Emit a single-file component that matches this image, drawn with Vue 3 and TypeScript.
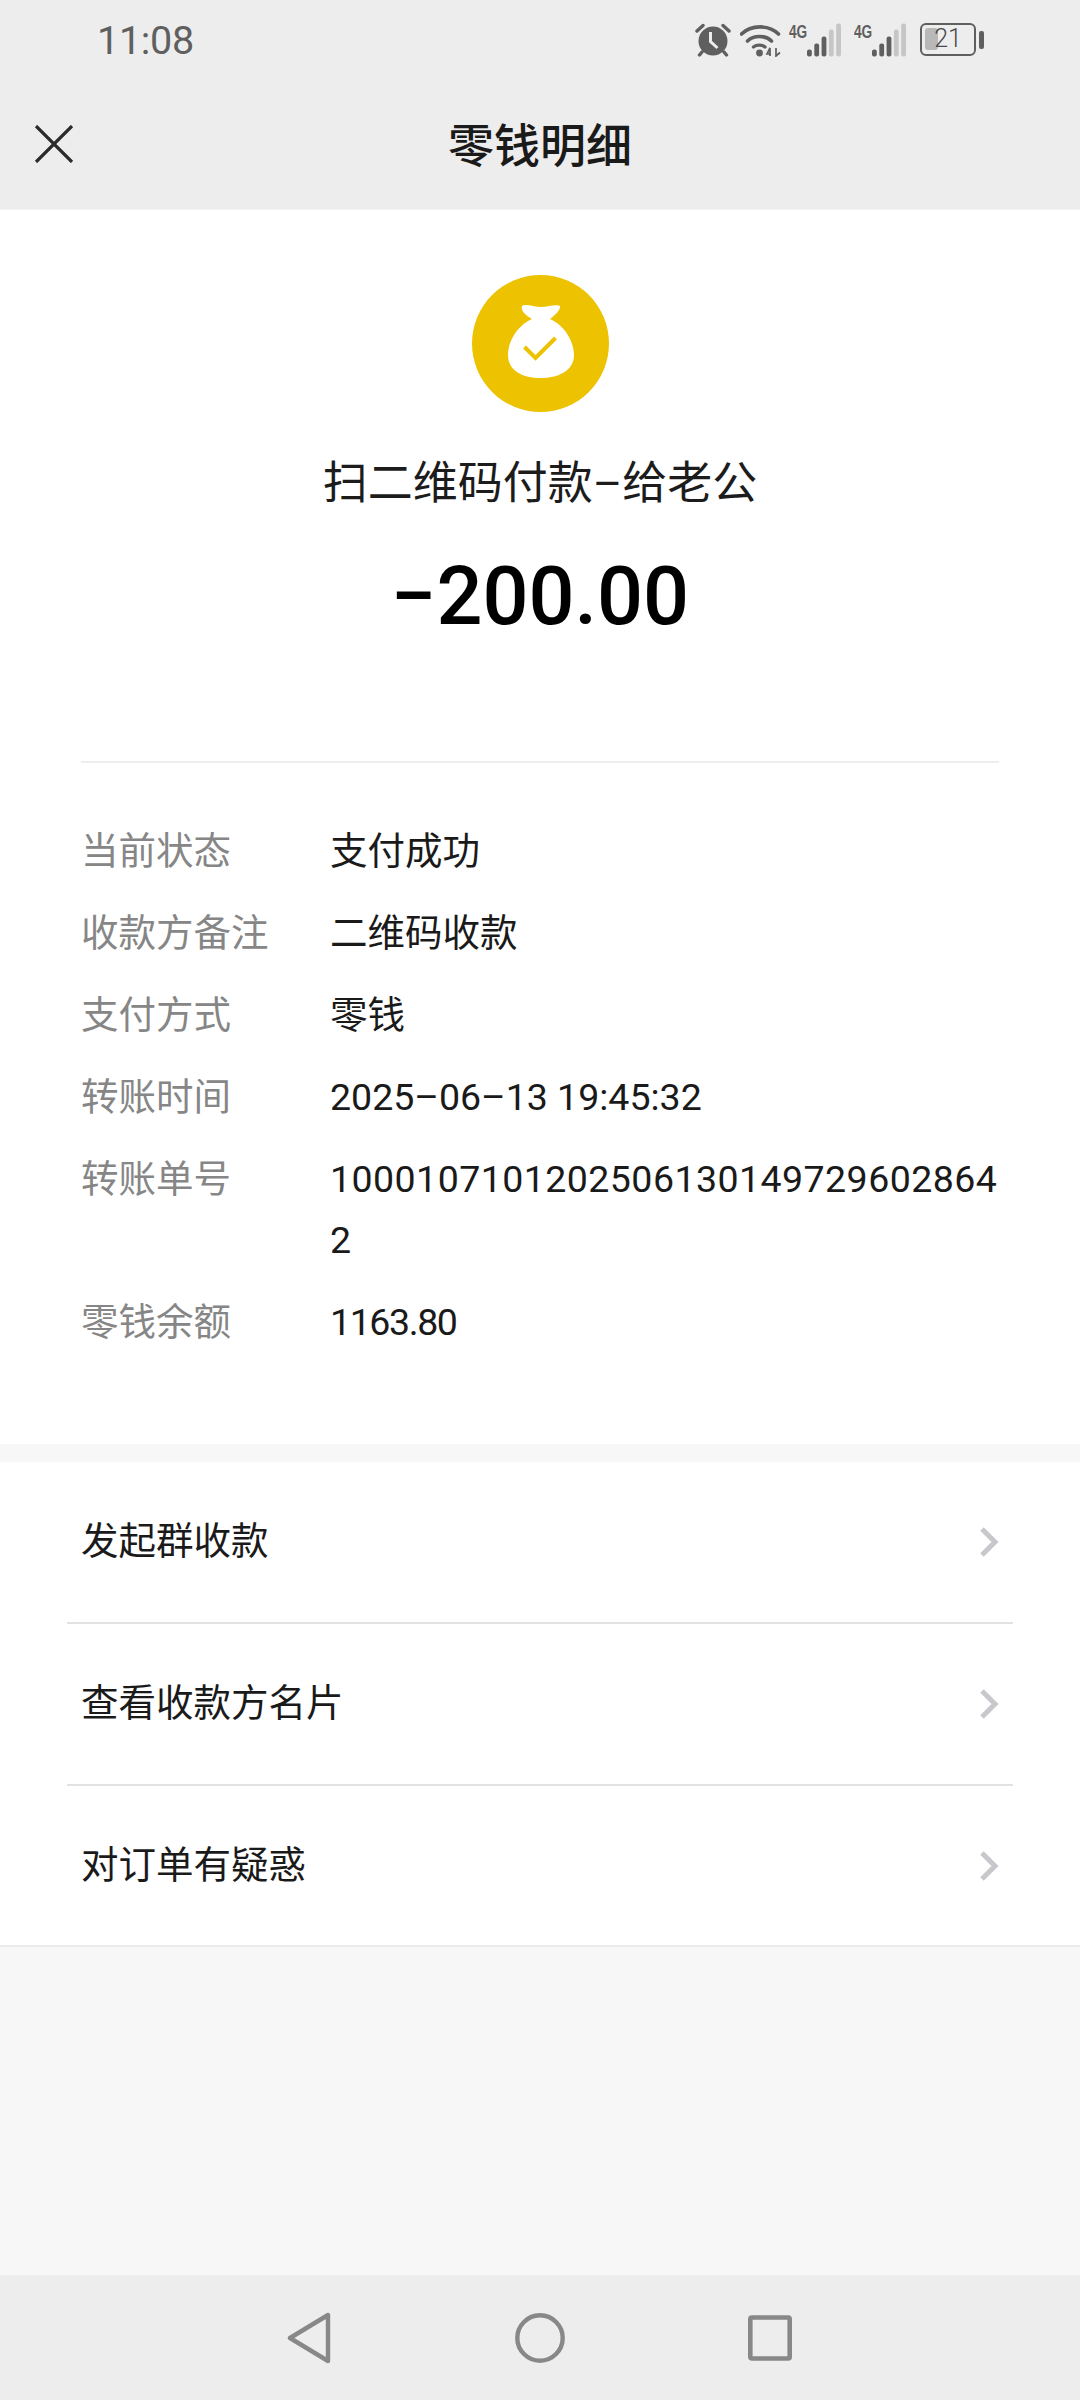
<script setup lang="ts">
const details: { label: string; value: string; kind?: string }[] = [
  { label: '当前状态', value: '支付成功' },
  { label: '收款方备注', value: '二维码收款' },
  { label: '支付方式', value: '零钱' },
  { label: '转账时间', value: '2025–06–13 19:45:32' },
  { label: '转账单号', value: '10001071012025061301497296028642', kind: 'digits' },
  { label: '零钱余额', value: '1163.80', kind: 'tight' },
];

const actions = ['发起群收款', '查看收款方名片', '对订单有疑惑'];

const bars = [
  { x: 0, h: 7, on: true },
  { x: 7.3, h: 13, on: true },
  { x: 14.6, h: 20, on: true },
  { x: 21.9, h: 27, on: false },
  { x: 29.2, h: 33, on: false },
];
</script>

<template>
  <div class="page">
    <header class="top">
      <div class="status">
        <span class="time">11:08</span>
        <div class="status-icons">
          <svg class="alarm" width="36" height="34" viewBox="0 0 36 34">
            <path d="M2 8 L8 2.5 M34 8 L28 2.5" stroke="#5f5f5f" stroke-width="3.4" stroke-linecap="round" />
            <path d="M7 29 L4.5 32 M29 29 L31.5 32" stroke="#5f5f5f" stroke-width="3.4" stroke-linecap="round" />
            <circle cx="18" cy="18" r="14.5" fill="#5f5f5f" />
            <path d="M15.5 9 V18.5 L22.5 25" fill="none" stroke="#ededed" stroke-width="3" />
          </svg>
          <svg class="wifi" width="42" height="34" viewBox="0 0 42 34">
            <path d="M1.5 11 C11 1.5 29 1.5 38.5 11" fill="none" stroke="#5f5f5f" stroke-width="3.6" stroke-linecap="round" />
            <path d="M7.5 18 C13.5 12 25.5 12 31.5 18" fill="none" stroke="#5f5f5f" stroke-width="3.6" stroke-linecap="round" />
            <path d="M13.5 24 C16.5 21.5 22 21.5 25 24" fill="none" stroke="#5f5f5f" stroke-width="3.4" stroke-linecap="round" />
            <circle cx="19.5" cy="30" r="3.4" fill="#5f5f5f" />
            <path d="M30 33 V25 L27 31 H31 M36 25 V33 L40 29.5" fill="none" stroke="#5f5f5f" stroke-width="1.7" />
          </svg>
          <div v-for="n in 2" :key="n" class="signal">
            <span class="net">4G</span>
            <svg width="36" height="34" viewBox="0 0 36 34">
              <rect
                v-for="bar in bars"
                :key="bar.x"
                :x="bar.x"
                :y="33.5 - bar.h"
                width="4.8"
                :height="bar.h"
                rx="2"
                :fill="bar.on ? '#5f5f5f' : '#c6c6c6'"
              />
            </svg>
          </div>
          <div class="battery">
            <div class="battery-body">
              <i class="battery-fill"></i>
              <span class="battery-num">21</span>
            </div>
            <i class="battery-tip"></i>
          </div>
        </div>
      </div>
      <div class="nav">
        <svg class="close" width="40" height="38" viewBox="0 0 40 38">
          <path d="M2 1 L38 37 M38 1 L2 37" stroke="#2b2b2b" stroke-width="3.2" />
        </svg>
        <h1 class="nav-title">零钱明细</h1>
      </div>
    </header>

    <section class="card">
      <svg class="bag" width="137" height="137" viewBox="0 0 137 137">
        <circle cx="68.5" cy="68.5" r="68.5" fill="#edc200" />
        <path
          d="M50 31 C54 28 62 32 69 32 C76 32 84 29 88 31 C89 35 82 41 78 44 C92 50 102 66 102 80 C102 96 86 103 68.5 103 C51 103 36 96 36 80 C36 66 46 50 60 44 C55 41 48 36 50 31 Z"
          fill="#fff"
        />
        <path d="M52.5 72 L63.5 83 L83.5 63" fill="none" stroke="#edc200" stroke-width="4" />
      </svg>
      <div class="payee">扫二维码付款–给老公</div>
      <div class="amount">−200.00</div>
      <div class="rule"></div>
      <dl class="details">
        <div v-for="item in details" :key="item.label" class="detail">
          <dt>{{ item.label }}</dt>
          <dd :class="item.kind">{{ item.value }}</dd>
        </div>
      </dl>
    </section>

    <ul class="actions">
      <li v-for="action in actions" :key="action" class="action">
        <span class="action-text">{{ action }}</span>
        <svg width="20" height="30" viewBox="0 0 20 30">
          <path d="M3 2 L16 15 L3 28" fill="none" stroke="#c8c8cc" stroke-width="5" />
        </svg>
      </li>
    </ul>

    <div class="spacer"></div>

    <footer class="sysnav">
      <svg width="45" height="52" viewBox="0 0 45 52">
        <path d="M41 3 V49 L3 26 Z" fill="none" stroke="#888" stroke-width="4.4" stroke-linejoin="round" />
      </svg>
      <svg width="50" height="50" viewBox="0 0 50 50">
        <circle cx="25" cy="25" r="22.7" fill="none" stroke="#888" stroke-width="4.4" />
      </svg>
      <svg width="44" height="46" viewBox="0 0 44 46">
        <rect x="2.3" y="2.5" width="39.4" height="41" rx="1.5" fill="none" stroke="#888" stroke-width="4.6" />
      </svg>
    </footer>
  </div>
</template>

<style>
html,
body {
  margin: 0;
  background: #f7f7f7;
}
</style>

<style scoped>
.page {
  width: 1080px;
  height: 2400px;
  display: flex;
  flex-direction: column;
  background: #f7f7f7;
  color: #1a1a1a;
  font-family: Roboto, "Noto Sans CJK SC", sans-serif;
}

.top {
  background: #ededed;
  height: 209px;
  flex: none;
  border-bottom: 1px solid #f4f4f4;
}

.status {
  height: 80px;
  display: flex;
  align-items: center;
  justify-content: space-between;
  padding: 0 96px 0 97px;
}

.time {
  font-size: 39.5px;
  color: #5f5f5f;
  line-height: 80px;
  letter-spacing: -0.3px;
  margin-top: 2px;
}

.status-icons {
  display: flex;
  align-items: center;
  height: 34px;
  margin-top: -1px;
}

.alarm {
  margin-right: 9px;
}

.wifi {
  margin-right: 7px;
}

.signal {
  display: flex;
  align-items: flex-start;
  width: 65px;
  height: 34px;
}

.net {
  flex: none;
  width: 18px;
  font-size: 19px;
  line-height: 18px;
  font-weight: 700;
  color: #5f5f5f;
  font-family: "Liberation Sans", sans-serif;
  transform: scaleX(0.72);
  transform-origin: left top;
  white-space: nowrap;
}

.battery {
  display: flex;
  align-items: center;
  margin-left: 1px;
}

.battery-body {
  position: relative;
  box-sizing: border-box;
  width: 56px;
  height: 33px;
  border: 2.5px solid #5f5f5f;
  border-radius: 6px;
}

.battery-fill {
  position: absolute;
  left: 3px;
  top: 3px;
  width: 13px;
  height: 22px;
  background: #b8b8b8;
  border-radius: 3px;
}

.battery-num {
  position: absolute;
  inset: 0;
  text-align: center;
  font-size: 25px;
  line-height: 28px;
  color: #4a4a4a;
  font-weight: 300;
}

.battery-tip {
  width: 5px;
  height: 18px;
  margin-left: 3px;
  border-radius: 2px;
  background: #5f5f5f;
}

.nav {
  height: 129px;
  display: flex;
  align-items: center;
  justify-content: center;
  position: relative;
}

.close {
  position: absolute;
  left: 34px;
  top: 45px;
}

.nav-title {
  margin: 3px 0 0;
  font-size: 46px;
  font-weight: 500;
  line-height: 130px;
  color: #1a1a1a;
}

.card {
  background: #fff;
  flex: none;
  height: 1234px;
  box-sizing: border-box;
  padding-top: 65px;
  display: flex;
  flex-direction: column;
  align-items: center;
}

.bag {
  display: block;
  flex: none;
}

.payee {
  margin-top: 42px;
  font-size: 45px;
  line-height: 60px;
  color: #1c1c1c;
}

.amount {
  margin-top: 33px;
  font-size: 81px;
  line-height: 100px;
  font-weight: 500;
  color: #000;
}

.rule {
  width: 918px;
  height: 2px;
  background: #eeeeee;
  margin-top: 114px;
  flex: none;
}

.details {
  width: 918px;
  margin: 58px 0 0;
  display: flex;
  flex-direction: column;
  gap: 21px;
}

.detail {
  display: grid;
  grid-template-columns: 249px 669px;
  font-size: 37.5px;
  line-height: 61px;
}

.detail dt {
  color: #868686;
}

.detail dd {
  margin: 0;
  color: #1a1a1a;
  word-break: break-all;
}

.detail dd.digits {
  letter-spacing: 0.45px;
}

.detail dd.tight {
  letter-spacing: -1.4px;
}

.actions {
  list-style: none;
  margin: 18px 0 0;
  padding: 0 67px;
  background: #fff;
  border-bottom: 2px solid #ebebeb;
  flex: none;
}

.action {
  height: 160px;
  display: flex;
  align-items: center;
  justify-content: space-between;
  padding: 0 14px;
  font-size: 37.5px;
  color: #1a1a1a;
  border-bottom: 2px solid #e2e2e2;
}

.action-text {
  margin-bottom: 9px;
}

.action:last-child {
  height: 159px;
  border-bottom: 0;
}

.spacer {
  flex: 1;
}

.sysnav {
  height: 125px;
  flex: none;
  background: #ededed;
  display: flex;
  align-items: center;
  gap: 183px;
  padding-left: 287px;
}
</style>
